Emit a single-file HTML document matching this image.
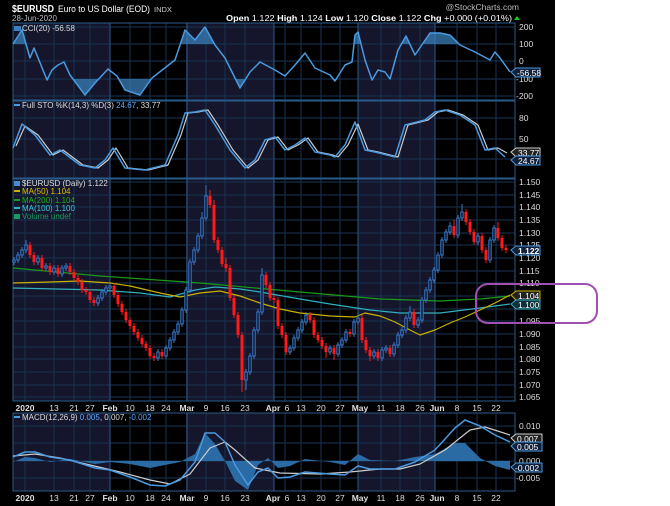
<!DOCTYPE html>
<html><head><meta charset="utf-8"><style>
html,body{margin:0;padding:0;background:#fff;width:670px;height:506px;overflow:hidden}
svg{display:block;font-family:"Liberation Sans",sans-serif}
</style></head><body>
<svg width="670" height="506" xmlns="http://www.w3.org/2000/svg">
<defs>
<clipPath id="ca"><rect x="0" y="0" width="600" height="44"/></clipPath>
<clipPath id="cb"><rect x="0" y="79" width="600" height="30"/></clipPath>
<clipPath id="cm"><rect x="13" y="413" width="502" height="78"/></clipPath>
</defs>
<rect x="0" y="0" width="555" height="506" fill="#000"/>
<!-- month shading -->
<g fill="#15152b">
<rect x="13" y="23" width="97" height="77"/><rect x="186" y="23" width="88" height="77"/><rect x="358" y="23" width="77" height="77"/>
<rect x="13" y="101" width="97" height="77"/><rect x="186" y="101" width="88" height="77"/><rect x="358" y="101" width="77" height="77"/>
<rect x="13" y="179" width="97" height="222"/><rect x="186" y="179" width="88" height="222"/><rect x="358" y="179" width="77" height="222"/>
<rect x="13" y="413" width="97" height="78"/><rect x="186" y="413" width="88" height="78"/><rect x="358" y="413" width="77" height="78"/>
</g>
<!-- grid -->
<g stroke="#173352" stroke-width="1" fill="none">
<path d="M25,23V401M54,23V401M74,23V401M90,23V401M130,23V401M150,23V401M166,23V401M206,23V401M225,23V401M245,23V401M285,23V401M301,23V401M321,23V401M340,23V401M381,23V401M400,23V401M420,23V401M457,23V401M477,23V401M496,23V401"/>
<path d="M25,413V491M54,413V491M74,413V491M90,413V491M130,413V491M150,413V491M166,413V491M206,413V491M225,413V491M245,413V491M285,413V491M301,413V491M321,413V491M340,413V491M381,413V491M400,413V491M420,413V491M457,413V491M477,413V491M496,413V491"/>
<path d="M13,27H515M13,44H515M13,61H515M13,79H515M13,96H515M13,118H515M13,139H515M13,159H515M13,426H515M13,443H515M13,461H515M13,478H515"/>
<path d="M13,182H515M13,195H515M13,207H515M13,220H515M13,233H515M13,245H515M13,258H515M13,271H515M13,283H515M13,296H515M13,309H515M13,321H515M13,334H515M13,347H515M13,359H515M13,372H515M13,385H515M13,397H515"/>
</g>
<g stroke="#2a5a8a" fill="none">
<path d="M110,23V401M187,23V401M274,23V401M358,23V401M435,23V401M110,413V491M187,413V491M274,413V491M358,413V491M435,413V491"/>
<rect x="13" y="23" width="502" height="77"/><rect x="13" y="101" width="502" height="77"/><rect x="13" y="179" width="502" height="222"/><rect x="13" y="413" width="502" height="78"/>
</g>
<!-- CCI -->
<g fill="#3a7fb8" fill-opacity="0.75">
<polygon clip-path="url(#ca)" points="13,44 22,30 30,58 34,48 47,80 52,70 58,65 64,62 70,75 85,95 95,83 108,69 117,76 125,90 140,95 152,78 175,60 185,30 195,40 205,27 215,45 225,58 240,88 250,72 260,62 275,70 285,76 295,65 305,53 315,68 330,75 335,81 345,65 352,62 355,35 358,32 365,60 372,80 378,70 385,72 390,79 398,50 406,36 415,55 430,33 440,33 450,35 460,45 475,52 490,60 495,52 500,58 510,72 510,44"/>
<polygon clip-path="url(#cb)" points="13,79 13,44 22,30 30,58 34,48 47,80 52,70 58,65 64,62 70,75 85,95 95,83 108,69 117,76 125,90 140,95 152,78 175,60 185,30 195,40 205,27 215,45 225,58 240,88 250,72 260,62 275,70 285,76 295,65 305,53 315,68 330,75 335,81 345,65 352,62 355,35 358,32 365,60 372,80 378,70 385,72 390,79 398,50 406,36 415,55 430,33 440,33 450,35 460,45 475,52 490,60 495,52 500,58 510,72 510,79"/>
</g>
<polyline fill="none" stroke="#4a9ae0" stroke-width="1.5" stroke-linejoin="round" points="13,44 22,30 30,58 34,48 47,80 52,70 58,65 64,62 70,75 85,95 95,83 108,69 117,76 125,90 140,95 152,78 175,60 185,30 195,40 205,27 215,45 225,58 240,88 250,72 260,62 275,70 285,76 295,65 305,53 315,68 330,75 335,81 345,65 352,62 355,35 358,32 365,60 372,80 378,70 385,72 390,79 398,50 406,36 415,55 430,33 440,33 450,35 460,45 475,52 490,60 495,52 500,58 510,72"/>
<!-- STO -->
<polyline fill="none" stroke="#ccc" stroke-width="1.2" stroke-linejoin="round" points="16,146 25,126 38,135 53,155 63,150 83,165 98,168 108,160 116,148 128,168 148,170 168,165 181,135 188,113 198,112 208,110 218,125 233,150 248,168 258,160 268,140 278,137 288,150 298,145 308,138 318,152 333,155 338,157 348,145 358,124 368,150 378,152 398,157 408,125 428,120 438,112 448,110 463,115 478,125 488,150 498,148 507,153"/>
<polyline fill="none" stroke="#4a9ae0" stroke-width="1.5" stroke-linejoin="round" points="13,148 22,124 35,135 50,155 60,150 80,165 95,168 105,160 113,148 125,168 145,170 165,165 178,135 185,113 195,112 205,110 215,125 230,150 245,168 255,160 265,140 275,137 285,150 295,145 305,138 315,152 330,155 335,157 345,145 355,122 365,150 375,152 395,157 405,125 425,120 435,112 445,110 460,115 475,125 485,150 495,148 505,157"/>
<!-- MAs -->
<g fill="none" stroke-width="1.2" stroke-linejoin="round">
<polyline stroke="#1a9a1a" points="13,268 100,276 200,283 300,292 380,299 440,301 480,299 510,296"/>
<polyline stroke="#30b0c0" points="13,288 100,290 140,293 170,297 195,290 215,287 240,289 260,292 300,299 330,304 370,310 400,313 440,313 480,308 510,304"/>
<polyline stroke="#c8b000" points="13,283 50,282 80,281 110,283 130,286 160,293 180,297 200,293 220,291 240,296 260,303 280,309 300,313 330,316 355,317 365,313 380,316 395,322 410,330 420,335 435,330 450,323 465,317 480,310 495,303 510,295"/>
</g>
<!-- candles -->
<path stroke="#ff1a1a" stroke-width="1" fill="none" d="M30,242V258M34,252V265M42,255V271M50,263V275M58,265V277M70,263V275M74,269V281M78,275V285M82,279V293M86,287V295M90,289V303M94,297V306M114,283V298M118,292V307M122,301V315M126,309V323M130,317V329M134,323V335M138,329V341M142,335V347M146,341V351M150,345V359M154,353V361M162,349V359M210,190V208M214,200V243M218,237V253M222,247V267M226,258V272M230,265V301M234,295V318M238,312V338M242,332V392M266,272V288M270,282V301M274,295V303M278,297V329M282,323V338M286,332V355M310,312V323M314,317V338M318,332V343M322,337V349M326,343V358M334,345V360M350,329V337M362,315V343M366,337V353M370,347V361M378,349V361M390,345V357M414,309V328M454,220V238M466,209V225M470,219V235M474,229V245M482,233V253M486,247V263M498,222V241M502,235V251M506,245V253"/>
<path fill="#ff1a1a" d="M28.5,245h3V255h-3zM32.5,255h3V262h-3zM40.5,258h3V268h-3zM48.5,266h3V272h-3zM56.5,268h3V274h-3zM68.5,266h3V272h-3zM72.5,272h3V278h-3zM76.5,278h3V282h-3zM80.5,282h3V290h-3zM84.5,290h3V292h-3zM88.5,292h3V300h-3zM92.5,300h3V303h-3zM112.5,286h3V295h-3zM116.5,295h3V304h-3zM120.5,304h3V312h-3zM124.5,312h3V320h-3zM128.5,320h3V326h-3zM132.5,326h3V332h-3zM136.5,332h3V338h-3zM140.5,338h3V344h-3zM144.5,344h3V348h-3zM148.5,348h3V356h-3zM152.5,356h3V358h-3zM160.5,352h3V356h-3zM208.5,196h3V205h-3zM212.5,205h3V240h-3zM216.5,240h3V250h-3zM220.5,250h3V264h-3zM224.5,264h3V268h-3zM228.5,268h3V298h-3zM232.5,298h3V315h-3zM236.5,315h3V335h-3zM240.5,335h3V380h-3zM264.5,275h3V285h-3zM268.5,285h3V298h-3zM272.5,298h3V300h-3zM276.5,300h3V326h-3zM280.5,326h3V335h-3zM284.5,335h3V352h-3zM308.5,315h3V320h-3zM312.5,320h3V335h-3zM316.5,335h3V340h-3zM320.5,340h3V346h-3zM324.5,346h3V352h-3zM332.5,348h3V354h-3zM348.5,332h3V334h-3zM360.5,318h3V340h-3zM364.5,340h3V350h-3zM368.5,350h3V356h-3zM376.5,352h3V358h-3zM388.5,348h3V354h-3zM412.5,312h3V325h-3zM452.5,226h3V235h-3zM464.5,212h3V222h-3zM468.5,222h3V232h-3zM472.5,232h3V242h-3zM480.5,236h3V250h-3zM484.5,250h3V260h-3zM496.5,228h3V238h-3zM500.5,238h3V248h-3zM504.5,248h3V250h-3z"/>
<path stroke="#3a78c8" stroke-width="1" fill="none" d="M14,257V265M18,252V263M22,247V258M26,240V253M38,255V265M46,263V271M54,265V275M62,265V277M66,263V271M98,295V306M102,289V301M106,285V295M110,283V291M158,349V361M166,345V359M170,337V351M174,329V343M178,321V335M182,307V327M186,287V313M190,259V293M194,247V265M198,233V253M202,212V239M206,185V221M246,369V390M250,353V375M254,327V359M258,309V333M262,268V315M290,345V355M294,335V351M298,327V341M302,319V333M306,312V325M330,345V355M338,342V357M342,337V348M346,329V343M354,319V337M358,313V325M374,349V359M382,347V361M386,345V353M394,342V357M398,332V348M402,327V338M406,315V333M410,306V321M418,317V328M422,297V323M426,287V303M430,277V293M434,267V283M438,252V273M442,237V258M446,229V243M450,222V235M458,215V238M462,204V221M478,233V245M490,237V263M494,225V243"/>
<path stroke="#3a78c8" stroke-width="1" fill="#0c1428" d="M12.8,260h2.4V262h-2.4zM16.8,255h2.4V260h-2.4zM20.8,250h2.4V255h-2.4zM24.8,245h2.4V250h-2.4zM36.8,258h2.4V262h-2.4zM44.8,266h2.4V268h-2.4zM52.8,268h2.4V272h-2.4zM60.8,268h2.4V274h-2.4zM64.8,266h2.4V268h-2.4zM96.8,298h2.4V303h-2.4zM100.8,292h2.4V298h-2.4zM104.8,288h2.4V292h-2.4zM108.8,286h2.4V288h-2.4zM156.8,352h2.4V358h-2.4zM164.8,348h2.4V356h-2.4zM168.8,340h2.4V348h-2.4zM172.8,332h2.4V340h-2.4zM176.8,324h2.4V332h-2.4zM180.8,310h2.4V324h-2.4zM184.8,290h2.4V310h-2.4zM188.8,262h2.4V290h-2.4zM192.8,250h2.4V262h-2.4zM196.8,236h2.4V250h-2.4zM200.8,218h2.4V236h-2.4zM204.8,196h2.4V218h-2.4zM244.8,372h2.4V380h-2.4zM248.8,356h2.4V372h-2.4zM252.8,330h2.4V356h-2.4zM256.8,312h2.4V330h-2.4zM260.8,275h2.4V312h-2.4zM288.8,348h2.4V352h-2.4zM292.8,338h2.4V348h-2.4zM296.8,330h2.4V338h-2.4zM300.8,322h2.4V330h-2.4zM304.8,315h2.4V322h-2.4zM328.8,348h2.4V352h-2.4zM336.8,345h2.4V354h-2.4zM340.8,340h2.4V345h-2.4zM344.8,332h2.4V340h-2.4zM352.8,322h2.4V334h-2.4zM356.8,318h2.4V322h-2.4zM372.8,352h2.4V356h-2.4zM380.8,350h2.4V358h-2.4zM384.8,348h2.4V350h-2.4zM392.8,345h2.4V354h-2.4zM396.8,335h2.4V345h-2.4zM400.8,330h2.4V335h-2.4zM404.8,318h2.4V330h-2.4zM408.8,312h2.4V318h-2.4zM416.8,320h2.4V325h-2.4zM420.8,300h2.4V320h-2.4zM424.8,290h2.4V300h-2.4zM428.8,280h2.4V290h-2.4zM432.8,270h2.4V280h-2.4zM436.8,255h2.4V270h-2.4zM440.8,240h2.4V255h-2.4zM444.8,232h2.4V240h-2.4zM448.8,226h2.4V232h-2.4zM456.8,218h2.4V235h-2.4zM460.8,212h2.4V218h-2.4zM476.8,236h2.4V242h-2.4zM488.8,240h2.4V260h-2.4zM492.8,228h2.4V240h-2.4z"/>
<!-- MACD -->
<polygon clip-path="url(#cm)" fill="#2a6aa5" points="13,461 13,462 25,457 35,458 50,462 70,459 95,464 110,462 130,464 150,468 165,465 180,462 195,454 205,433 215,444 225,461 235,481 248,490 258,465 268,458 278,468 290,466 305,459 330,462 345,465 358,454 370,460 395,461 415,457 435,454 455,443 465,443 480,458 495,466 510,470 510,461"/>
<polyline fill="none" stroke="#ccc" stroke-width="1.2" stroke-linejoin="round" points="13,456 35,454 60,458 90,465 120,472 150,480 170,484 190,474 210,448 225,442 235,450 255,468 280,473 320,474 350,472 380,469 400,469 420,464 445,450 470,430 485,427 510,435"/>
<polyline fill="none" stroke="#4a9ae0" stroke-width="1.5" stroke-linejoin="round" points="13,457 25,452 35,452 50,457 70,460 95,468 110,470 130,477 150,485 165,486 180,480 195,462 205,433 215,433 225,442 235,465 248,485 258,472 268,468 278,478 290,477 305,472 330,474 345,475 358,466 370,469 395,469 415,462 435,450 455,428 465,420 480,426 495,435 510,442"/>
<!-- header / legends -->
<g font-size="9" fill="#fff">
<text x="12" y="12" font-weight="bold" font-size="10" textLength="42" lengthAdjust="spacingAndGlyphs">$EURUSD</text>
<text x="58" y="12" font-size="9" textLength="92" lengthAdjust="spacingAndGlyphs">Euro to US Dollar (EOD)</text>
<text x="154" y="12" font-size="7.5" fill="#ccc">INDX</text>
<text x="12" y="21" font-size="8" fill="#bbb">28-Jun-2020</text>
<text x="519" y="10" font-size="8.5" fill="#bbb" text-anchor="end">@StockCharts.com</text>
<text x="226" y="21" font-size="8.5" textLength="286" lengthAdjust="spacingAndGlyphs"><tspan font-weight="bold">Open</tspan> 1.122 <tspan font-weight="bold">High</tspan> 1.124 <tspan font-weight="bold">Low</tspan> 1.120 <tspan font-weight="bold">Close</tspan> 1.122 <tspan font-weight="bold">Chg</tspan> +0.000 (+0.01%)</text>
<polygon points="514,20 520,20 517,16" fill="#1c1"/>
<text x="22" y="31" font-size="8" fill="#ddd">CCI(20) -56.58</text>
<rect x="14" y="26" width="7" height="5" fill="#3a7fc0"/>
<text x="22" y="108" font-size="8" fill="#ddd">Full STO %K(14,3) %D(3) <tspan fill="#5aa8ff">24.67</tspan>, 33.77</text>
<rect x="14" y="104" width="6" height="2" fill="#4a9ae0"/>
<text x="22" y="186" font-size="8" fill="#ddd">$EURUSD (Daily) 1.122</text>
<rect x="14" y="181" width="6" height="5" fill="#4a8ad0"/>
<text x="22" y="194" font-size="8" fill="#d8c000">MA(50) 1.104</text><rect x="14" y="190" width="6" height="2" fill="#c8b000"/>
<text x="22" y="203" font-size="8" fill="#1cb01c">MA(200) 1.104</text><rect x="14" y="199" width="6" height="2" fill="#1a9a1a"/>
<text x="22" y="211" font-size="8" fill="#40c8d8">MA(100) 1.100</text><rect x="14" y="207" width="6" height="2" fill="#30b0c0"/>
<text x="22" y="219" font-size="8" fill="#1a9a60">Volume undef</text><rect x="14" y="214" width="6" height="5" fill="#1a9a60"/>
<text x="22" y="420" font-size="8" fill="#ddd">MACD(12,26,9) <tspan fill="#5aa8ff">0.005</tspan>, 0.007, <tspan fill="#5aa8ff">-0.002</tspan></text>
<rect x="14" y="416" width="6" height="2" fill="#4a9ae0"/>
</g>
<g font-size="8.5" fill="#ddd">
<text x="519" y="30">200</text><text x="519" y="47">100</text><text x="519" y="64">0</text><text x="516" y="82">-100</text><text x="516" y="99">-200</text>
<text x="519" y="121">80</text><text x="519" y="142">50</text>
<text x="519" y="185">1.150</text><text x="519" y="198">1.145</text><text x="519" y="210">1.140</text><text x="519" y="223">1.135</text><text x="519" y="236">1.130</text><text x="519" y="248">1.125</text><text x="519" y="261">1.120</text><text x="519" y="274">1.115</text><text x="519" y="286">1.110</text><text x="519" y="299">1.105</text><text x="519" y="324">1.095</text><text x="519" y="337">1.090</text><text x="519" y="350">1.085</text><text x="519" y="362">1.080</text><text x="519" y="375">1.075</text><text x="519" y="388">1.070</text><text x="519" y="400">1.065</text>
<text x="519" y="429">0.010</text><text x="519" y="464">0.000</text><text x="516" y="481">-0.005</text>
</g>
<g font-size="8.5">
<polygon points="511,72 516,68 540,68 540,77 516,77" fill="#10203a" stroke="#4a9ae0"/><text x="517" y="76" fill="#fff">-56.58</text>
<polygon points="511,152 516,148 540,148 540,157 516,157" fill="#222" stroke="#ccc"/><text x="518" y="156" fill="#fff">33.77</text>
<polygon points="511,160 516,156 540,156 540,165 516,165" fill="#10203a" stroke="#4a9ae0"/><text x="518" y="164" fill="#fff">24.67</text>
<polygon points="511,250 516,246 540,246 540,255 516,255" fill="#10203a" stroke="#4a9ae0"/><text x="518" y="254" fill="#fff" font-weight="bold">1.122</text>
<polygon points="511,295 516,291 540,291 540,300 516,300" fill="#222" stroke="#c8b000"/><text x="518" y="299" fill="#fff">1.104</text>
<polygon points="511,304 516,300 540,300 540,309 516,309" fill="#10303a" stroke="#30b0c0"/><text x="518" y="308" fill="#fff">1.100</text>
<polygon points="511,438 516,434 542,434 542,443 516,443" fill="#222" stroke="#ccc"/><text x="517" y="442" fill="#fff">0.007</text>
<polygon points="511,446 516,442 542,442 542,451 516,451" fill="#10203a" stroke="#4a9ae0"/><text x="517" y="450" fill="#fff">0.005</text>
<polygon points="511,467 516,463 542,463 542,472 516,472" fill="#10203a" stroke="#4a9ae0"/><text x="515" y="471" fill="#fff">-0.002</text>
</g>
<g font-size="8.5" fill="#ddd" text-anchor="middle">
<text x="25" y="411" font-weight="bold">2020</text><text x="54" y="411">13</text><text x="74" y="411">21</text><text x="90" y="411">27</text><text x="110" y="411" font-weight="bold">Feb</text><text x="130" y="411">10</text><text x="150" y="411">18</text><text x="166" y="411">24</text><text x="187" y="411" font-weight="bold">Mar</text><text x="206" y="411">9</text><text x="225" y="411">16</text><text x="245" y="411">23</text><text x="273" y="411" font-weight="bold">Apr</text><text x="287" y="411">6</text><text x="301" y="411">13</text><text x="321" y="411">20</text><text x="340" y="411">27</text><text x="360" y="411" font-weight="bold">May</text><text x="381" y="411">11</text><text x="400" y="411">18</text><text x="420" y="411">26</text><text x="437" y="411" font-weight="bold">Jun</text><text x="457" y="411">8</text><text x="477" y="411">15</text><text x="496" y="411">22</text>
<text x="25" y="501" font-weight="bold">2020</text><text x="54" y="501">13</text><text x="74" y="501">21</text><text x="90" y="501">27</text><text x="110" y="501" font-weight="bold">Feb</text><text x="130" y="501">10</text><text x="150" y="501">18</text><text x="166" y="501">24</text><text x="187" y="501" font-weight="bold">Mar</text><text x="206" y="501">9</text><text x="225" y="501">16</text><text x="245" y="501">23</text><text x="273" y="501" font-weight="bold">Apr</text><text x="287" y="501">6</text><text x="301" y="501">13</text><text x="321" y="501">20</text><text x="340" y="501">27</text><text x="360" y="501" font-weight="bold">May</text><text x="381" y="501">11</text><text x="400" y="501">18</text><text x="420" y="501">26</text><text x="437" y="501" font-weight="bold">Jun</text><text x="457" y="501">8</text><text x="477" y="501">15</text><text x="496" y="501">22</text>
</g>
<rect x="476" y="284" width="121" height="39" rx="12" fill="none" stroke="#a050b0" stroke-width="2"/>
</svg>
</body></html>
